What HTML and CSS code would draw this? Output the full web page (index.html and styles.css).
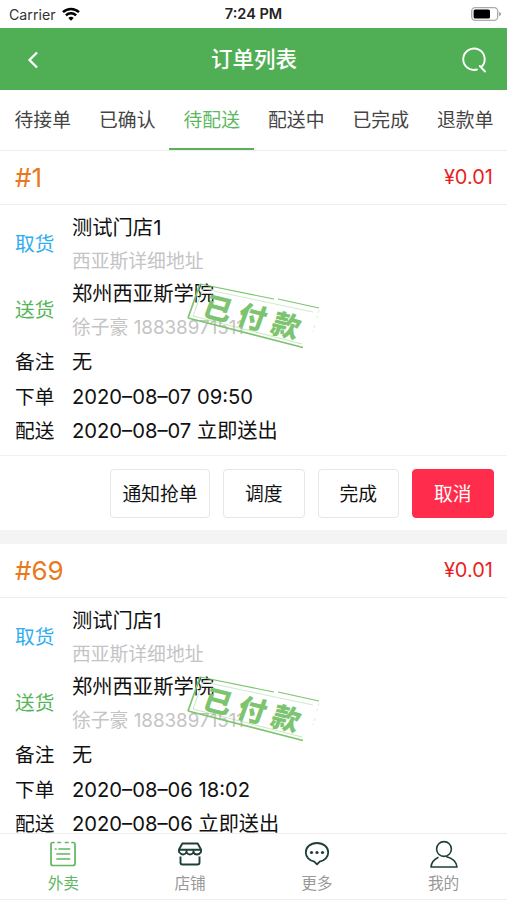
FILE: index.html
```html
<!DOCTYPE html>
<html lang="zh-CN">
<head>
  <meta charset="UTF-8" />
  <meta name="viewport" content="width=device-width, initial-scale=1.0" />
  <title>订单列表</title>
  <link rel="stylesheet" href="styles.css">
</head>
<body>
  <div class="app">
    <div class="status-bar">
      <div class="carrier">
        <span>Carrier</span>
        <svg width="18" height="14" viewBox="0 0 18 14" fill="none" stroke="#000" stroke-width="2.5">
          <path d="M1 5.2a11.4 11.4 0 0 1 16 0" />
          <path d="M3.9 8.4a7.3 7.3 0 0 1 10.2 0" />
          <path d="M6.3 11a3.9 3.9 0 0 1 5.4 0L9 13.7z" fill="#000" stroke="none" />
        </svg>
      </div>
      <div class="time">7:24 PM</div>
      <div class="battery">
        <svg width="30" height="14" viewBox="0 0 30 14">
          <rect x=".7" y=".7" width="26" height="12.6" rx="3.5" fill="none" stroke="#aaa" stroke-width="1.3" />
          <rect x="2.6" y="2.4" width="16.4" height="9.2" rx="1.6" />
          <path d="M28.2 4.8v4.4q1.8-.8 1.8-2.2t-1.8-2.2z" fill="#999" />
        </svg>
      </div>
    </div>

    <div class="header">
      <svg class="back" width="12" height="18" viewBox="0 0 12 18" fill="none" stroke="#fff" stroke-width="2.3">
        <path d="M10 1.5L2.5 9l7.500 7.500" />
      </svg>
      <div class="title">订单列表</div>
      <svg class="search" width="26" height="26" viewBox="0 0 26 26" fill="none" stroke="#fff" stroke-width="1.9" stroke-linecap="round">
        <path d="M16 22.500A10.700 10.700 0 1 1 20 20.300M18.800 19L24 24.500" />
      </svg>
    </div>

    <div class="tabs">
      <div class="tab">待接单</div>
      <div class="tab">已确认</div>
      <div class="tab active">待配送</div>
      <div class="tab">配送中</div>
      <div class="tab">已完成</div>
      <div class="tab">退款单</div>
    </div>

    <div class="list">
      <div class="order">
        <div class="order-head">
          <span class="number">#1</span>
          <span class="price">¥0.01</span>
        </div>
        <div class="order-body">
          <div class="place">
            <span class="label pickup">取货</span>
            <div>
              <div class="name">测试门店1</div>
              <div class="detail">西亚斯详细地址</div>
            </div>
          </div>
          <div class="place">
            <span class="label deliver">送货</span>
            <div>
              <div class="name">郑州西亚斯学院</div>
              <div class="detail">徐子豪 18838971511</div>
            </div>
          </div>
          <div class="row"><span class="label">备注</span><span>无</span></div>
          <div class="row"><span class="label">下单</span><span>2020–08–07 09:50</span></div>
          <div class="row"><span class="label">配送</span><span>2020–08–07 立即送出</span></div>
          <svg class="stamp" width="136" height="72" viewBox="0 0 136 72">
            <g fill="none" stroke="#7cc46f">
              <path d="M16 2L4 36" stroke-width="1.700" />
              <path d="M4 36L119 65.500" stroke-width="1.700" />
              <path d="M16 2L90 17M94 17L135 26" stroke-width="1.100" />
              <path d="M20 7L129 30" stroke-width=".6" opacity=".6" />
              <path d="M19 7L9 34L118 62" stroke-width=".6" opacity=".7" />
              <path d="M135 28l-2 8M131 43l-2 7" stroke-width=".6" stroke-dasharray="3 3" opacity=".5" />
            </g>
            <text class="stamp-text" transform="translate(17 33) rotate(14) skewX(-6)">已付款</text>
          </svg>
        </div>
        <div class="actions">
          <button class="btn wide">通知抢单</button>
          <button class="btn">调度</button>
          <button class="btn">完成</button>
          <button class="btn cancel">取消</button>
        </div>
      </div>

      <div class="order">
        <div class="order-head">
          <span class="number">#69</span>
          <span class="price">¥0.01</span>
        </div>
        <div class="order-body">
          <div class="place">
            <span class="label pickup">取货</span>
            <div>
              <div class="name">测试门店1</div>
              <div class="detail">西亚斯详细地址</div>
            </div>
          </div>
          <div class="place">
            <span class="label deliver">送货</span>
            <div>
              <div class="name">郑州西亚斯学院</div>
              <div class="detail">徐子豪 18838971511</div>
            </div>
          </div>
          <div class="row"><span class="label">备注</span><span>无</span></div>
          <div class="row"><span class="label">下单</span><span>2020–08–06 18:02</span></div>
          <div class="row"><span class="label">配送</span><span>2020–08–06 立即送出</span></div>
          <svg class="stamp" width="136" height="72" viewBox="0 0 136 72">
            <g fill="none" stroke="#7cc46f">
              <path d="M16 2L4 36" stroke-width="1.700" />
              <path d="M4 36L119 65.500" stroke-width="1.700" />
              <path d="M16 2L90 17M94 17L135 26" stroke-width="1.100" />
              <path d="M20 7L129 30" stroke-width=".6" opacity=".6" />
              <path d="M19 7L9 34L118 62" stroke-width=".6" opacity=".7" />
              <path d="M135 28l-2 8M131 43l-2 7" stroke-width=".6" stroke-dasharray="3 3" opacity=".5" />
            </g>
            <text class="stamp-text" transform="translate(17 33) rotate(14) skewX(-6)">已付款</text>
          </svg>
        </div>
      </div>
    </div>

    <div class="tabbar">
      <div class="item active">
        <svg width="28" height="28" viewBox="0 0 28 28" fill="none" stroke="#5fb760" stroke-width="1.7" stroke-linecap="round">
          <path d="M5 2.500H4Q2 2.500 2 4.500V23.500Q2 25.500 4 25.500H24Q26 25.500 26 23.500V4.500Q26 2.500 24 2.500H23M9 2.500h2.500M16.500 2.500h2.500" />
          <path d="M6.500 9H7M10 9h10.500M8 14h12.500M8 19h12.500" />
        </svg>
        <span>外卖</span>
      </div>
      <div class="item">
        <svg width="28" height="28" viewBox="0 0 28 28" fill="none" stroke="#1e3f39" stroke-width="1.9" stroke-linejoin="round">
          <path d="M6.300 3.500H21.700L25 9.500V12Q23.500 14.500 21 14.500T17.500 12.500Q16 14.500 14 14.500T10.500 12.500Q9 14.500 7 14.500T3 12V9.500z" />
          <path d="M3 9.800H25M10.500 9.800v3M17.500 9.800v3M4.500 16.500V22.500Q4.500 24.500 6.500 24.500H21.500Q23.500 24.500 23.500 22.500V16.500" />
        </svg>
        <span>店铺</span>
      </div>
      <div class="item">
        <svg width="28" height="28" viewBox="0 0 28 28" fill="none" stroke="#1e3f39" stroke-width="1.8" stroke-linejoin="round">
          <path d="M14 3C7.300 3 2.800 7.300 2.800 12.500C2.800 17 6.300 20.700 11.300 21.600L14 24.300L16.700 21.600C21.700 20.700 25.200 17 25.200 12.500C25.200 7.300 20.700 3 14 3z" />
          <g fill="#1e3f39" stroke="none">
            <circle cx="8.500" cy="12.500" r="1.600" />
            <circle cx="14" cy="12.500" r="1.600" />
            <circle cx="19.500" cy="12.500" r="1.600" />
          </g>
        </svg>
        <span>更多</span>
      </div>
      <div class="item">
        <svg width="28" height="28" viewBox="0 0 28 28" fill="none" stroke="#1e3f39" stroke-width="1.600" stroke-linejoin="round">
          <circle cx="14" cy="9" r="7.400" />
          <path d="M8.500 17.200Q1.500 20.500 1 27H27Q26 19 16 16.500" />
        </svg>
        <span>我的</span>
      </div>
    </div>
  </div>
</body>
</html>
```

FILE: styles.css
```css
* {
  box-sizing: border-box;
}
body {
  margin: 0;
  font-family: Inter, "Noto Sans CJK SC", sans-serif;
  background: #fff;
  color: #111;
}
.app {
  display: flex;
  flex-direction: column;
  height: 900px;
  overflow: hidden;
}
.status-bar {
  display: flex;
  align-items: center;
  flex: none;
  height: 28px;
  padding: 0 6px 0 9px;
  font-size: 14px;
}
.status-bar > div {
  flex: 1;
}
.carrier {
  display: flex;
  align-items: center;
  gap: 6px;
  color: #333;
  font-size: 14.2px;
}
.status-bar .time {
  flex: none;
  margin: 0 3px 2px 0;
  font-size: 14.5px;
  font-weight: 600;
  color: #222;
}
.status-bar .battery {
  display: flex;
  justify-content: flex-end;
}
.header {
  display: flex;
  align-items: center;
  justify-content: space-between;
  flex: none;
  height: 62px;
  padding: 0 20px 0 27px;
  background: #50ae55;
}
.back {
  margin: 1px 8px 0 0;
}
.search {
  margin-top: 2px;
}
.title {
  color: #fff;
  font-size: 21.5px;
  font-weight: 500;
  line-height: 30px;
}
.tabs {
  display: flex;
  flex: none;
  height: 61px;
  border-bottom: 1px solid #eee;
}
.tab {
  flex: 1;
  height: 60px;
  padding-left: 1px;
  line-height: 62px;
  text-align: center;
  font-size: 18.8px;
  color: #444;
}
.tab.active {
  color: #5cb860;
  border-bottom: 2px solid #5aae5e;
}
.list {
  flex: 1;
  min-height: 0;
  overflow: hidden;
  background: #f4f4f4;
}
.order {
  background: #fff;
  margin-bottom: 14px;
}
.order-head {
  display: flex;
  align-items: center;
  justify-content: space-between;
  height: 54px;
  padding: 0 14px 0 15px;
  border-bottom: 1px solid #eee;
}
.number {
  font-size: 26px;
  color: #e8791e;
}
.price {
  margin-bottom: 2px;
  font-size: 20px;
  color: #e81f1f;
}
.order-body {
  position: relative;
  height: 250px;
  padding: 5px 15px 0;
  font-size: 20.2px;
}
.label {
  flex: none;
  width: 57px;
  font-size: 19.7px;
}
.place {
  display: flex;
  align-items: center;
  height: 66px;
}
.place .label {
  margin-bottom: 1px;
}
.name {
  height: 33px;
  line-height: 36px;
  font-size: 20.3px;
}
.detail {
  height: 33px;
  line-height: 37px;
  font-size: 18.8px;
  color: #c4c4c4;
}
.pickup {
  color: #30adf0;
}
.deliver {
  color: #55b559;
}
.row {
  display: flex;
  height: 34.5px;
  line-height: 40px;
}
.stamp {
  position: absolute;
  left: 184px;
  top: 77px;
}
.stamp-text {
  font-size: 28px;
  font-weight: 900;
  letter-spacing: 7px;
  fill: #7cc46f;
}
.actions {
  display: flex;
  justify-content: flex-end;
  gap: 13px;
  height: 75px;
  padding: 13px 13.5px 0 0;
  border-top: 1px solid #f1f1f1;
}
.btn {
  width: 81.5px;
  height: 49px;
  padding: 0 0 2px;
  background: #fff;
  border: 1.5px solid #e6e6e6;
  border-radius: 4px;
  color: #111;
  font-family: inherit;
  font-size: 18.8px;
}
.btn.wide {
  width: 100px;
}
.btn.cancel {
  background: #ff2c4b;
  border-color: #ff2c4b;
  color: #fff;
}
.tabbar {
  display: flex;
  flex: none;
  height: 67px;
  border-top: 1px solid #eee;
  border-bottom: 1px solid #eee;
  background: #fff;
}
.item {
  flex: 1;
  display: flex;
  flex-direction: column;
  align-items: center;
  padding-top: 6px;
  font-size: 15.7px;
  line-height: 31px;
  color: #999;
}
.item.active {
  color: #5cb860;
}
```
